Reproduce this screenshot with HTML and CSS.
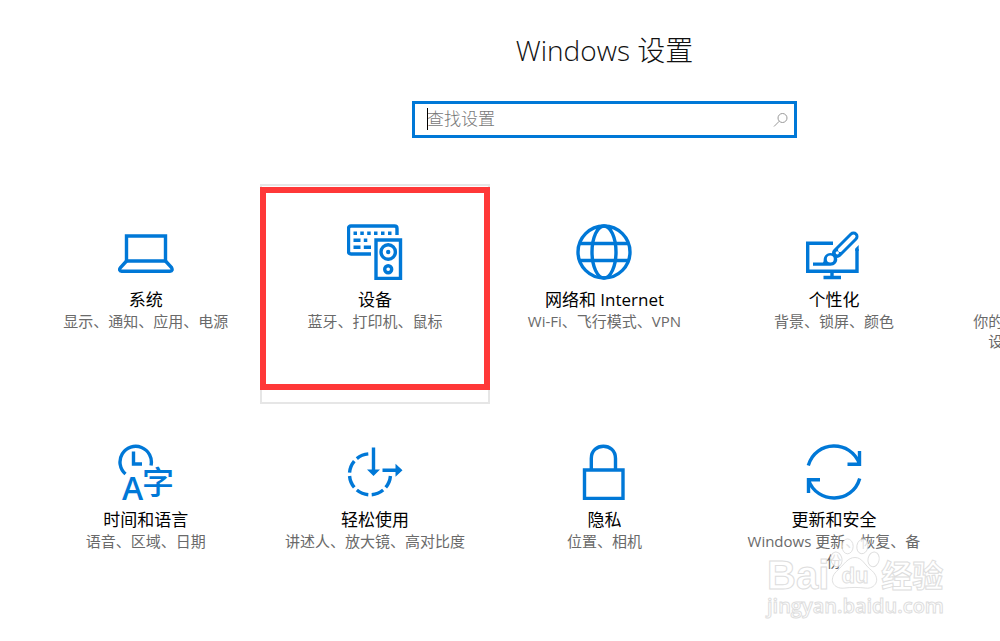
FILE: index.html
```html
<!DOCTYPE html>
<html lang="zh-CN">
<head>
    <meta charset="UTF-8">
    <meta name="viewport" content="width=device-width, initial-scale=1.0">
    <title>Windows 设置</title>
    <link rel="stylesheet" href="styles.css">
</head>
<body>
    <main class="settings">
        <h1>Windows 设置</h1>
        <form class="search">
            <input type="text" class="search-input" placeholder="查找设置" aria-label="查找设置">
            <span class="caret"></span>
            <button type="submit" class="search-button" aria-label="搜索">
                <svg width="16" height="16" viewBox="0 0 16 16">
                    <circle cx="9.500" cy="6" r="4.500"/>
                    <path d="M6.300 9.200L1 14.500"/>
                </svg>
            </button>
        </form>
        <nav class="tiles">
            <a href="#system" class="tile">
                <svg class="icon" viewBox="0 0 56 56">
                    <path d="M8.500 12h39v25h-39z"/>
                    <path d="M8.500 37L2.500 43.500C1 45.500 1.500 47.300 3.500 47.300H52C54.500 47.300 54.500 45.500 53.500 43.500L47.500 37"/>
                </svg>
                <h2>系统</h2>
                <p>显示、通知、应用、电源</p>
            </a>
            <a href="#devices" class="tile tile-active">
                <svg class="icon" viewBox="0 0 56 56">
                    <path d="M24 30H4Q1.500 30 1.500 27.500V4.500Q1.500 2 4 2H47.500Q50 2 50 4.500V11"/>
                    <path d="M6.500 9.200H10M13.300 9.200H16.800M20.200 9.200H23.700M27 9.200H30.500M34 9.200H37.500M41 9.200H44.500M6.500 16.200H13.500M16.800 16.200H20.300M6.500 23.200H13.500M16.800 23.200H24"/>
                    <path d="M29 16h24.500v38.500H29z"/>
                    <circle cx="41.200" cy="28" r="7.200"/>
                    <circle cx="41.200" cy="28" r="2.200" class="solid"/>
                    <circle cx="41.200" cy="45.300" r="3.500"/>
                </svg>
                <h2>设备</h2>
                <p>蓝牙、打印机、鼠标</p>
                <span class="highlight"></span>
            </a>
            <a href="#network" class="tile">
                <svg class="icon" viewBox="0 0 56 56">
                    <circle cx="28" cy="28" r="26"/>
                    <ellipse cx="28" cy="28" rx="12" ry="26"/>
                    <path d="M3.500 19.500h49M3.500 36.500h49"/>
                </svg>
                <h2>网络和 Internet</h2>
                <p>Wi-Fi、飞行模式、VPN</p>
            </a>
            <a href="#personalization" class="tile">
                <svg class="icon" viewBox="0 0 56 56">
                    <path d="M27 19.200H1.700V47.200H51V25"/>
                    <path class="solid" d="M49.300 24.500L52.700 21V27H49.300z"/>
                    <path d="M26 48V53M17.500 53.500H35"/>
                    <path d="M47.500 12.500L31 29" class="handle"/>
                    <path d="M47.500 12.500L34 26" class="handle-inner"/>
                    <path class="solid" d="M7 38.500H16.500C18 38.500 17.500 36 17.800 34.500C19 29.500 24 27.800 28 30C32.500 33 32 38 28.500 40.500C27 41.700 25 41.700 23 41.700H7z"/>
                    <circle cx="24.300" cy="35" r="3.500" class="blank"/>
                    <circle cx="31.300" cy="28.800" r="1.600" class="blank"/>
                </svg>
                <h2>个性化</h2>
                <p>背景、锁屏、颜色</p>
            </a>
            <a href="#accounts" class="tile">
                <svg class="icon" viewBox="0 0 56 56">
                    <circle cx="28" cy="16" r="13"/>
                    <path d="M4 55C4 25 52 25 52 55"/>
                </svg>
                <h2>帐户</h2>
                <p>你的帐户、电子邮件、同步设置、工作、其他人员</p>
            </a>
            <a href="#time" class="tile">
                <svg class="icon" viewBox="0 0 56 56">
                    <path d="M7.500 30A15.700 15.700 0 1 1 33 21.500"/>
                    <path d="M15.500 7.500V20H24"/>
                    <text x="4" y="56" class="letter">A</text>
                    <text x="24" y="50" class="hanzi">字</text>
                </svg>
                <h2>时间和语言</h2>
                <p>语音、区域、日期</p>
            </a>
            <a href="#ease" class="tile">
                <svg class="icon" viewBox="0 0 56 56">
                    <path class="dashes" pathLength="270" d="M43.500 30.300A20.500 20.500 0 1 1 23 9.800"/>
                    <path d="M26.500 3.500V27M35.500 26.300H50"/>
                    <path class="solid" d="M20 25.500H33L26.500 32zM48.500 19.800V32.800L55.500 26.300z"/>
                </svg>
                <h2>轻松使用</h2>
                <p>讲述人、放大镜、高对比度</p>
            </a>
            <a href="#privacy" class="tile">
                <svg class="icon" viewBox="0 0 56 56">
                    <path d="M8.500 26h38.500v28.500H8.500z"/>
                    <path d="M15.300 26V14.500C15.300 -1.800 39.500 -1.800 39.500 14.500V26"/>
                </svg>
                <h2>隐私</h2>
                <p>位置、相机</p>
            </a>
            <a href="#update" class="tile">
                <svg class="icon" viewBox="0 0 56 56">
                    <path d="M2.300 21.500C9.500 -4 45 -4.500 53.500 20M53.500 7V20.300H41.500"/>
                    <path d="M53.700 34.500C46.500 60 11 60.500 2.500 36M2.500 49V35.700H14"/>
                </svg>
                <h2>更新和安全</h2>
                <p>Windows 更新、恢复、备份</p>
            </a>
        </nav>
    </main>
    <div class="watermark">
        <div class="brand">
            <span class="brand-bai">Bai</span>
            <svg class="paw" width="52" height="58" viewBox="0 0 56 58">
                <ellipse cx="8" cy="24" rx="6" ry="8" transform="rotate(-12 8 24)"/>
                <ellipse cx="20" cy="10" rx="6" ry="8"/>
                <ellipse cx="36" cy="10" rx="6" ry="8" transform="rotate(10 36 10)"/>
                <ellipse cx="48" cy="24" rx="6" ry="8" transform="rotate(12 48 24)"/>
                <path d="M28 22C36 22 38 30 46 36C57 46 49 56 40 55C33 54 23 54 16 55C5 56 -1 46 8 37C17 29 20 22 28 22z"/>
                <text x="28" y="50" class="paw-text">du</text>
            </svg>
            <span class="brand-cn">经验</span>
        </div>
        <div class="site">jingyan.baidu.com</div>
    </div>
</body>
</html>
```
FILE: styles.css
```css
body {
    margin: 0;
    background-color: #fff;
    color: #000;
    font-family: "Open Sans", "Noto Sans CJK SC", sans-serif;
    overflow: hidden;
}
.settings {
    min-width: 1147px;
    padding: 30px 31px 0;
}
h1 {
    margin: 0;
    font-size: 28px;
    line-height: 40px;
    font-weight: 300;
    text-align: center;
    color: #111;
}
.search {
    position: relative;
    display: flex;
    align-items: center;
    box-sizing: border-box;
    width: 385px;
    height: 37px;
    margin: 31px auto 46px;
    border: 3px solid #0078d7;
}
.search-input {
    flex: 1;
    min-width: 0;
    padding: 0 12px 2px;
    border: none;
    outline: none;
    background: none;
    font: inherit;
    font-size: 17px;
    font-weight: 300;
}
.search-input::placeholder {
    color: #777;
    opacity: 1;
}
.caret {
    position: absolute;
    left: 12px;
    top: 4px;
    width: 1px;
    height: 22px;
    background-color: #000;
}
.search-button {
    display: flex;
    padding: 0 5px;
    border: none;
    background: none;
}
.search-button svg {
    fill: none;
    stroke: #999;
}
.tiles {
    display: grid;
    grid-template-columns: repeat(5, 1fr);
}
.tile {
    position: relative;
    display: flex;
    flex-direction: column;
    align-items: center;
    box-sizing: border-box;
    min-height: 220px;
    padding: 38px 22px 0;
    border: 2px solid transparent;
    color: inherit;
    text-decoration: none;
}
.tile-active {
    border-color: #e6e6e6;
}
.highlight {
    position: absolute;
    top: 1px;
    left: -2px;
    right: -2px;
    height: 191px;
    border: 6px solid #ff3838;
}
.tile h2 {
    margin: 9px 0 0;
    font-size: 17px;
    line-height: 22px;
    font-weight: 400;
}
.tile p {
    margin: 0;
    font-size: 15px;
    line-height: 20px;
    font-weight: 400;
    text-align: center;
    color: #6a6a6a;
}
.icon {
    width: 56px;
    height: 56px;
    fill: none;
    stroke: #0078d7;
    stroke-width: 3.4;
}
.icon .solid {
    fill: #0078d7;
    stroke: none;
}
.icon .blank {
    fill: #fff;
    stroke: none;
}
.icon .handle {
    stroke-width: 10;
    stroke-linecap: round;
}
.icon .handle-inner {
    stroke: #fff;
    stroke-width: 4;
    stroke-linecap: round;
}
.icon .dashes {
    stroke-dasharray: 35 10;
    stroke-dashoffset: -5;
}
.icon text {
    fill: #0078d7;
    stroke: none;
}
.letter {
    font: 600 32px "Open Sans", sans-serif;
}
.hanzi {
    font: 500 32px "Noto Sans CJK SC", sans-serif;
}
.watermark {
    position: absolute;
    top: 535px;
    left: 767px;
    color: #fff;
    font-family: "Liberation Sans", "Noto Sans CJK SC", sans-serif;
    font-weight: 700;
    -webkit-text-stroke: 1px #d6d6d6;
    opacity: 0.8;
}
.brand {
    display: flex;
    align-items: flex-end;
}
.brand-bai {
    font-size: 40px;
    line-height: 36px;
}
.brand-cn {
    font-size: 31px;
    line-height: 32px;
}
.paw {
    fill: #fff;
    stroke: #d6d6d6;
}
.paw-text {
    font-size: 24px;
    text-anchor: middle;
}
.site {
    font-family: "Open Sans", sans-serif;
    font-size: 20px;
    font-weight: 600;
    line-height: 26px;
}
```
